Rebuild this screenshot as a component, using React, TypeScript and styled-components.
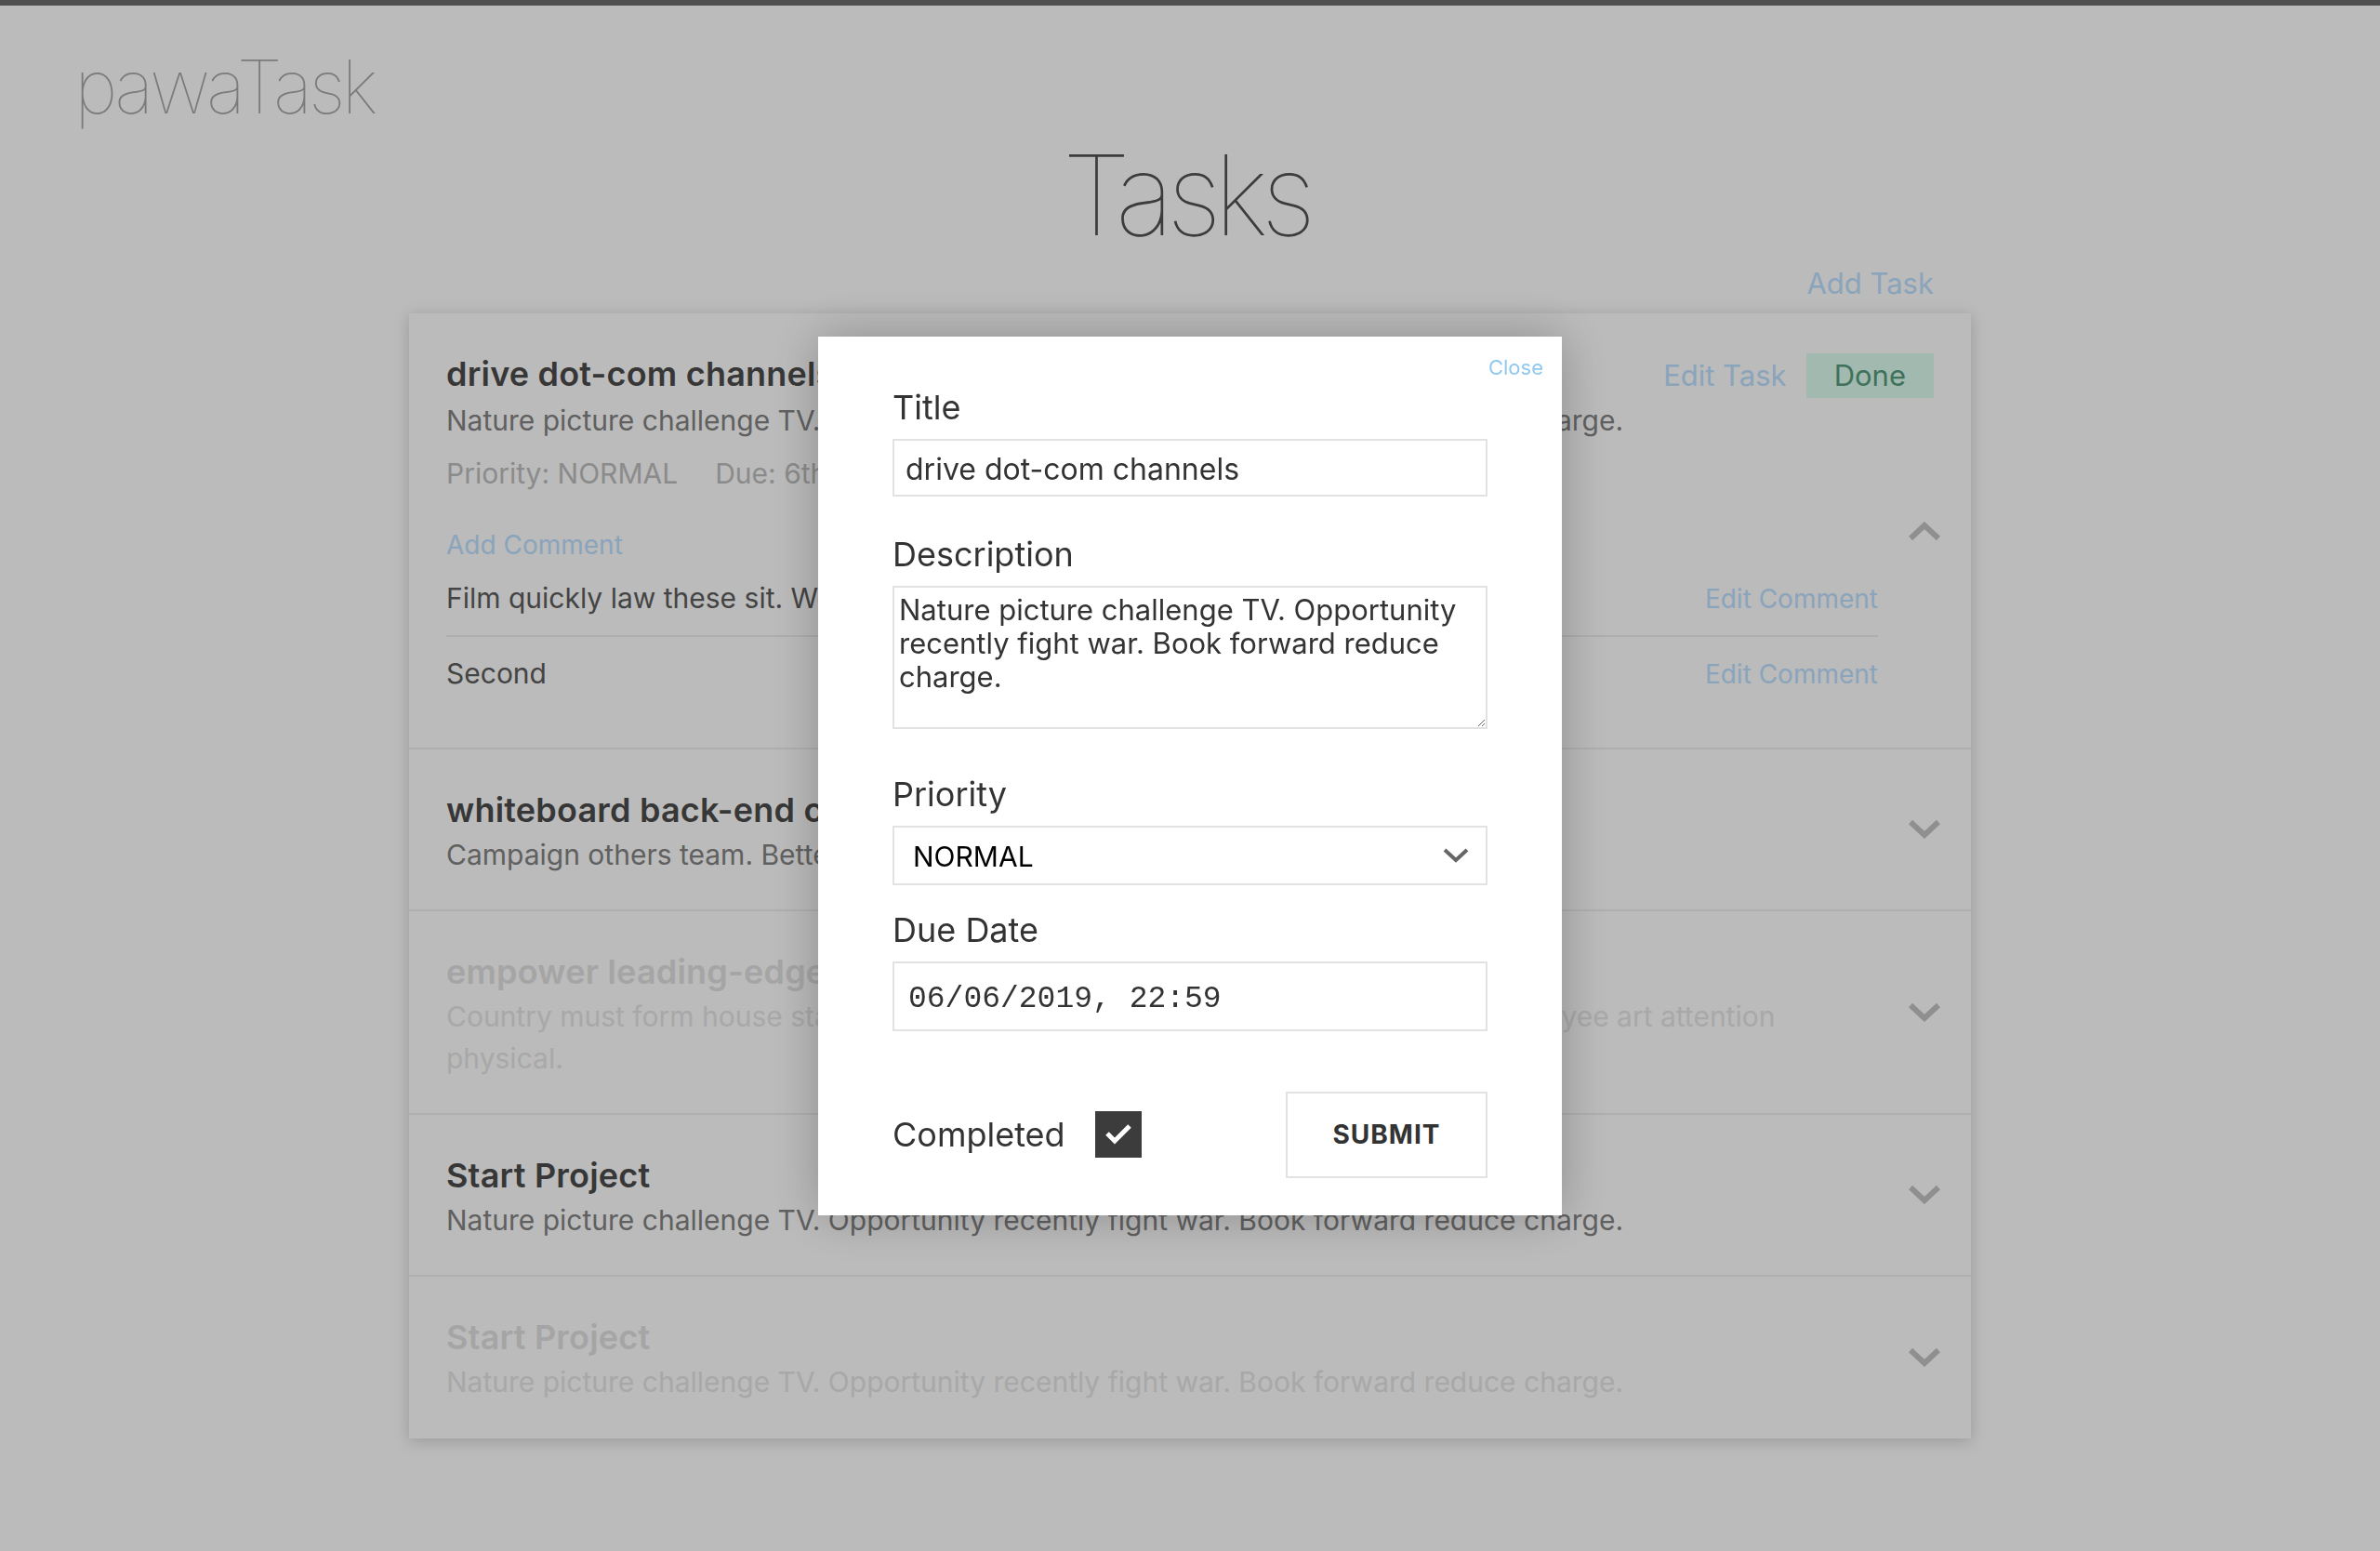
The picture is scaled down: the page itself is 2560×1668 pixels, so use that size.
import React from "react";
import styled, { createGlobalStyle } from "styled-components";

const GlobalStyle = createGlobalStyle`
  * {
    box-sizing: border-box;
  }

  html,
  body {
    margin: 0;
    padding: 0;
    background: #ffffff;
  }

  body {
    font-family: Inter, "Noto Sans", "Liberation Sans", sans-serif;
    color: #4c4c4c;
  }
`;

interface Task {
  title: string;
  description: string;
  faded?: boolean;
  expanded?: boolean;
  priority?: string;
  due?: string;
  comments?: string[];
}

const tasks: Task[] = [
  {
    title: "drive dot-com channels",
    description:
      "Nature picture challenge TV. Opportunity recently fight war. Book forward reduce charge.",
    expanded: true,
    priority: "NORMAL",
    due: "6th June 2019",
    comments: ["Film quickly law these sit. Well make rock.", "Second"],
  },
  {
    title: "whiteboard back-end content",
    description: "Campaign others team. Better give wear.",
  },
  {
    title: "empower leading-edge synergies",
    description:
      "Country must form house stage lot mention. Interest sound fact stay reason in employee art attention physical.",
    faded: true,
  },
  {
    title: "Start Project",
    description:
      "Nature picture challenge TV. Opportunity recently fight war. Book forward reduce charge.",
  },
  {
    title: "Start Project",
    description:
      "Nature picture challenge TV. Opportunity recently fight war. Book forward reduce charge.",
    faded: true,
  },
];

function Chevron({ up }: { up?: boolean }) {
  return (
    <svg width="34" height="20" viewBox="0 0 34 20">
      <polyline
        points={up ? "2,18 17,4 32,18" : "2,2 17,16 32,2"}
        fill="none"
        stroke="#c3c3c3"
        strokeWidth="6"
      />
    </svg>
  );
}

function TaskItem({ task }: { task: Task }) {
  return (
    <Item>
      <ItemHeader>
        <ItemTitle $faded={task.faded}>{task.title}</ItemTitle>
        {task.expanded && (
          <Actions>
            <LinkButton $size={31}>Edit Task</LinkButton>
            <DoneBadge>Done</DoneBadge>
          </Actions>
        )}
      </ItemHeader>
      <ItemDescription $faded={task.faded}>{task.description}</ItemDescription>
      {task.expanded && (
        <>
          <Meta>
            <span>Priority: {task.priority}</span>
            <span>Due: {task.due}</span>
          </Meta>
          <Comments>
            <LinkButton $size={28}>Add Comment</LinkButton>
            {task.comments?.map((c, i) => (
              <CommentRow key={i}>
                <CommentText>{c}</CommentText>
                <LinkButton $size={28}>Edit Comment</LinkButton>
              </CommentRow>
            ))}
          </Comments>
        </>
      )}
      <Toggle>
        <Chevron up={task.expanded} />
      </Toggle>
    </Item>
  );
}

function EditModal() {
  return (
    <Backdrop>
      <Modal>
        <CloseButton>Close</CloseButton>
        <Field $space={40}>
          <Label>Title</Label>
          <TextInput defaultValue="drive dot-com channels" />
        </Field>
        <Field $space={48}>
          <Label>Description</Label>
          <TextArea defaultValue="Nature picture challenge TV. Opportunity recently fight war. Book forward reduce charge." />
        </Field>
        <Field $space={26}>
          <Label>Priority</Label>
          <SelectWrap>
            <Select defaultValue="NORMAL">
              <option>LOW</option>
              <option>NORMAL</option>
              <option>HIGH</option>
            </Select>
            <SelectArrow>
              <svg width="28" height="16" viewBox="0 0 28 16">
                <polyline points="2,2 14,13 26,2" fill="none" stroke="#666" strokeWidth="4" />
              </svg>
            </SelectArrow>
          </SelectWrap>
        </Field>
        <Field $space={65}>
          <Label>Due Date</Label>
          <DateInput defaultValue="06/06/2019, 22:59" />
        </Field>
        <FormFooter>
          <CheckLabel>
            Completed
            <CheckBox>
              <svg width="30" height="24" viewBox="0 0 30 24">
                <polyline points="3,11 11,19 27,3" fill="none" stroke="#fff" strokeWidth="5" />
              </svg>
            </CheckBox>
          </CheckLabel>
          <SubmitButton>SUBMIT</SubmitButton>
        </FormFooter>
      </Modal>
    </Backdrop>
  );
}

export default function App() {
  return (
    <Page>
      <GlobalStyle />
      <Logo>pawaTask</Logo>
      <Heading>Tasks</Heading>
      <Board>
        <Toolbar>
          <LinkButton $size={31}>Add Task</LinkButton>
        </Toolbar>
        <Card>
          {tasks.map((t, i) => (
            <TaskItem key={i} task={t} />
          ))}
        </Card>
      </Board>
      <EditModal />
    </Page>
  );
}

const Page = styled.div`
  min-height: 100vh;
  border-top: 6px solid #6c6c6c;
  padding-bottom: 120px;
`;

const Logo = styled.div`
  margin: 47px 0 0 80px;
  font-size: 80px;
  line-height: 80px;
  font-weight: 100;
  letter-spacing: -4px;
  color: #a8a8a8;
`;

const Heading = styled.h1`
  margin: 17px 0 0;
  padding-right: 10px;
  text-align: center;
  font-size: 120px;
  line-height: 120px;
  font-weight: 100;
  letter-spacing: -8px;
  color: #525252;
`;

const Board = styled.div`
  width: 1680px;
  margin: 0 auto;
`;

const Toolbar = styled.div`
  display: flex;
  justify-content: flex-end;
  padding: 15px 40px 13px;
`;

const LinkButton = styled.span<{ $size: number }>`
  font-size: ${(p) => p.$size}px;
  line-height: ${(p) => p.$size + 8}px;
  color: #bce0ff;
  cursor: pointer;
  white-space: nowrap;
`;

const Card = styled.div`
  background: #ffffff;
  box-shadow: 0 3px 16px rgba(0, 0, 0, 0.18);
`;

const Item = styled.div`
  position: relative;
  padding: 41px 40px 36px;
  border-bottom: 2px solid #efefef;

  &:last-child {
    border-bottom: none;
    padding-bottom: 38px;
  }
`;

const ItemHeader = styled.div`
  display: flex;
  align-items: baseline;
`;

const ItemTitle = styled.div<{ $faded?: boolean }>`
  font-size: 36px;
  line-height: 48px;
  font-weight: 600;
  letter-spacing: 0.2px;
  color: ${(p) => (p.$faded ? "#e2e2e2" : "#4c4c4c")};
`;

const Actions = styled.div`
  margin-left: auto;
  display: flex;
  align-items: baseline;
  gap: 21px;
`;

const DoneBadge = styled.span`
  padding: 4px 30px;
  font-size: 31px;
  line-height: 40px;
  background: #dcfced;
  color: #579a7d;
`;

const ItemDescription = styled.p<{ $faded?: boolean }>`
  margin: 2px 60px 0 0;
  font-size: 30px;
  line-height: 45px;
  color: ${(p) => (p.$faded ? "#e6e6e6" : "#848484")};
`;

const Meta = styled.div`
  display: flex;
  gap: 40px;
  margin-top: 12px;
  font-size: 30px;
  line-height: 45px;
  color: #bebebe;
`;

const Comments = styled.div`
  margin: 36px 60px 4px 0;
`;

const CommentRow = styled.div`
  display: flex;
  justify-content: space-between;
  align-items: baseline;
  padding: 17px 0;
  border-bottom: 2px solid #eeeeee;

  &:last-child {
    border-bottom: none;
  }
`;

const CommentText = styled.span`
  font-size: 30px;
  line-height: 45px;
  color: #5d5d5d;
`;

const Toggle = styled.div`
  position: absolute;
  right: 33px;
  top: 50%;
  transform: translateY(-50%);
  display: flex;
`;

const Backdrop = styled.div`
  position: fixed;
  inset: 0;
  background: rgba(0, 0, 0, 0.267);
  display: flex;
  align-items: center;
  justify-content: center;
`;

const Modal = styled.div`
  position: relative;
  width: 800px;
  padding: 54px 80px 40px;
  background: #ffffff;
  box-shadow: 0 0 50px rgba(0, 0, 0, 0.25);
  color: #333333;
`;

const CloseButton = styled.span`
  position: absolute;
  top: 20px;
  right: 20px;
  font-size: 22px;
  line-height: 26px;
  color: #90c8f0;
  cursor: pointer;
`;

const Field = styled.div<{ $space: number }>`
  margin-bottom: ${(p) => p.$space}px;
`;

const Label = styled.label`
  display: block;
  margin-bottom: 12px;
  font-size: 36px;
  line-height: 44px;
  color: #333333;
`;

const TextInput = styled.input`
  display: block;
  width: 100%;
  height: 62px;
  padding: 4px 12px 0;
  border: 2px solid #e2e2e2;
  border-radius: 0;
  outline: none;
  font-family: inherit;
  font-size: 32px;
  color: #333333;
`;

const TextArea = styled.textarea`
  display: block;
  width: 100%;
  height: 154px;
  padding: 6px 5px 0;
  border: 2px solid #e2e2e2;
  border-radius: 0;
  outline: none;
  font-family: inherit;
  font-size: 31px;
  line-height: 36px;
  color: #333333;
`;

const SelectWrap = styled.div`
  position: relative;
`;

const Select = styled.select`
  display: block;
  width: 100%;
  height: 64px;
  padding: 2px 20px 0;
  appearance: none;
  border: 2px solid #e2e2e2;
  border-radius: 0;
  background: #ffffff;
  outline: none;
  font-family: inherit;
  font-size: 30px;
  color: #000000;
`;

const SelectArrow = styled.span`
  position: absolute;
  right: 20px;
  top: 50%;
  transform: translateY(-50%);
  display: flex;
  pointer-events: none;
`;

const DateInput = styled.input`
  display: block;
  width: 100%;
  height: 75px;
  padding: 6px 15px 0;
  border: 2px solid #e2e2e2;
  border-radius: 0;
  outline: none;
  font-family: "Liberation Mono", "DejaVu Sans Mono", monospace;
  font-size: 33px;
  color: #333333;
`;

const FormFooter = styled.div`
  display: flex;
  align-items: center;
  justify-content: space-between;
`;

const CheckLabel = styled.label`
  display: flex;
  align-items: center;
  gap: 32px;
  font-size: 36px;
  line-height: 44px;
  color: #333333;
`;

const CheckBox = styled.span`
  width: 50px;
  height: 50px;
  background: #3c3c3c;
  display: flex;
  align-items: center;
  justify-content: center;
`;

const SubmitButton = styled.button`
  width: 217px;
  height: 93px;
  border: 2px solid #e2e2e2;
  background: #ffffff;
  font-family: inherit;
  font-size: 28px;
  font-weight: 700;
  letter-spacing: 1px;
  color: #333333;
  cursor: pointer;
`;
